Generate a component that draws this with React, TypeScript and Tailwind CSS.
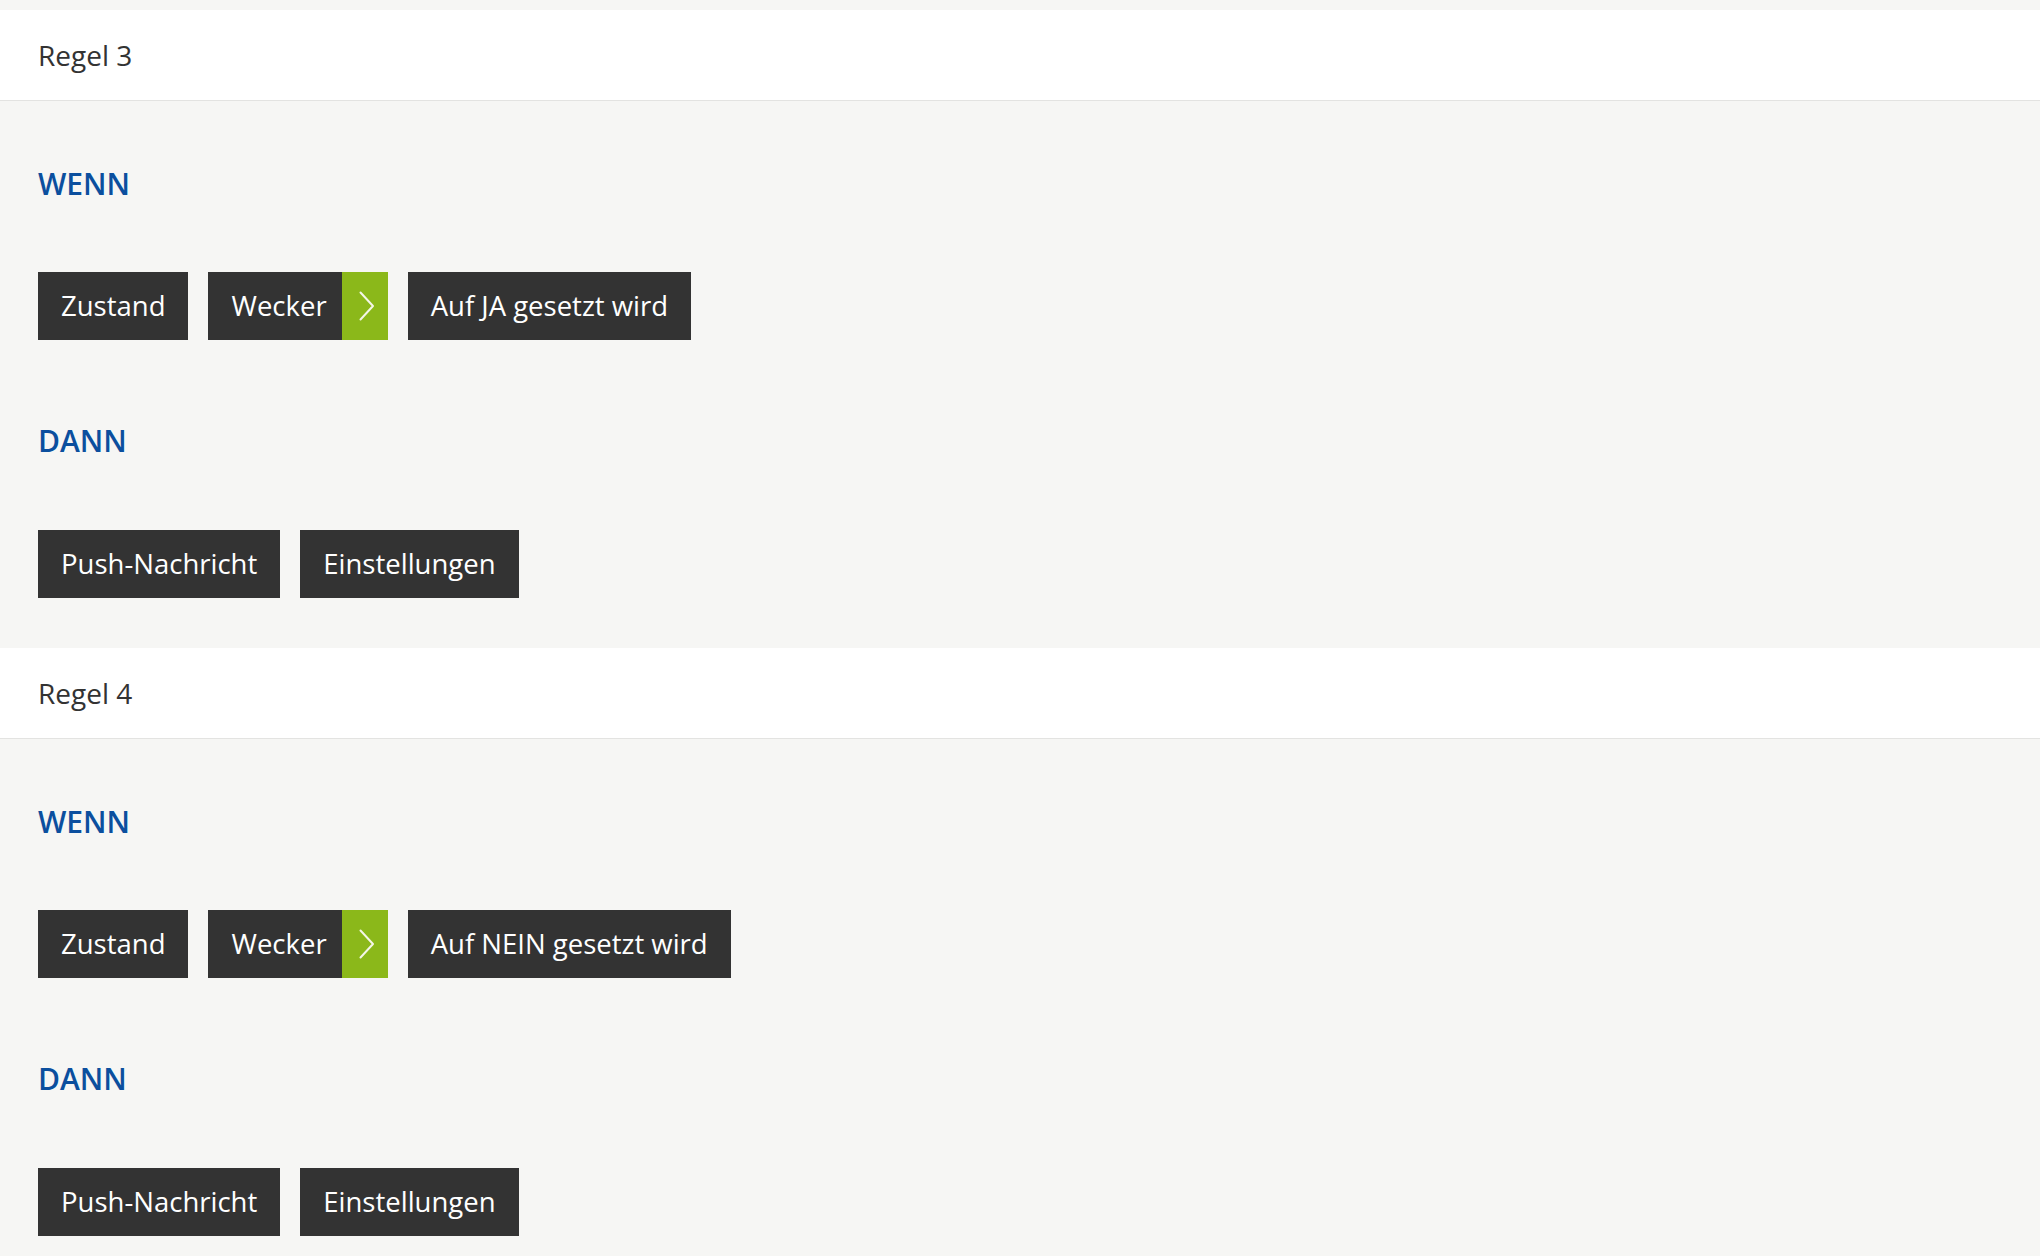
import React from "react";

const font = { fontFamily: '"Open Sans", "Noto Sans", sans-serif' };

function Btn({ children }: { children: React.ReactNode }) {
  return (
    <div className="h-[68px] bg-[#333333] px-[23px] flex items-center text-[27.5px] text-white leading-none whitespace-nowrap">
      {children}
    </div>
  );
}

function ChevronBtn({ children }: { children: React.ReactNode }) {
  return (
    <div className="h-[68px] flex">
      <div className="bg-[#333333] pl-[23px] pr-[15px] flex items-center text-[27.5px] text-white leading-none whitespace-nowrap">
        {children}
      </div>
      <div className="w-[46px] bg-[#8bb81a] flex items-center justify-center">
        <svg width="16" height="30" viewBox="0 0 16 30" className="ml-[4px]">
          <path d="M1.5 1.5 L14 15 L1.5 28.5" fill="none" stroke="#f4f6e8" strokeWidth="2" strokeLinecap="round" strokeLinejoin="round" />
        </svg>
      </div>
    </div>
  );
}

function Rule({ title, state }: { title: string; state: string }) {
  return (
    <div>
      <div className="h-[91px] bg-white border-b border-[#e3e3e1] flex items-center pl-[38px] text-[28px] text-[#333333]">
        {title}
      </div>
      <div className="bg-[#f6f6f4] pl-[38px] pt-[63px] pb-[50px]">
        <div className="text-[30px] leading-[40px] font-semibold text-[#0b4f9e]">WENN</div>
        <div className="flex gap-[20px] mt-[68px]">
          <Btn>Zustand</Btn>
          <ChevronBtn>Wecker</ChevronBtn>
          <Btn>{state}</Btn>
        </div>
        <div className="text-[30px] leading-[40px] font-semibold text-[#0b4f9e] mt-[81px]">DANN</div>
        <div className="flex gap-[20px] mt-[69px]">
          <Btn>Push-Nachricht</Btn>
          <Btn>Einstellungen</Btn>
        </div>
      </div>
    </div>
  );
}

export default function App() {
  return (
    <div className="min-h-[1256px] bg-[#f6f6f4] pt-[10px]" style={font}>
      <Rule title="Regel 3" state="Auf JA gesetzt wird" />
      <Rule title="Regel 4" state="Auf NEIN gesetzt wird" />
    </div>
  );
}
